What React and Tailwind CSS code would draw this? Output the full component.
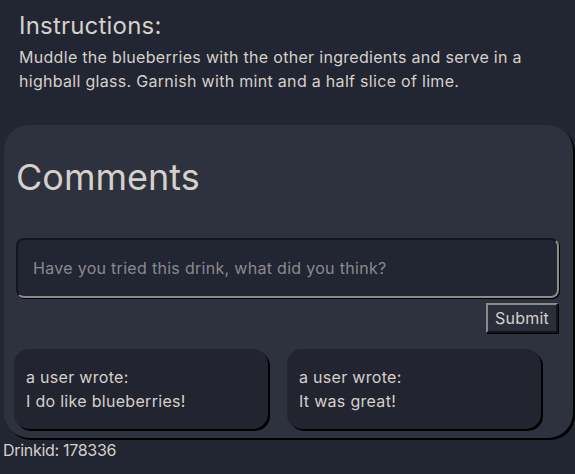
export default function App() {
  const font = { fontFamily: 'Inter, "Open Sans", sans-serif' };
  return (
    <div className="min-h-[474px] w-[575px] bg-[#222532] text-[#d6d0ca]" style={font}>
      <section className="px-[19px] pt-[10px]">
        <h3 className="text-[24px] leading-[32px] tracking-[0.2px]">Instructions:</h3>
        <p className="mt-[3px] text-[16px] leading-[24px] tracking-[0.3px]">
          Muddle the blueberries with the other ingredients and serve in a highball glass. Garnish with mint and a half slice of lime.
        </p>
      </section>

      <section className="ml-[4px] mt-[32px] w-[569px] rounded-[25px] bg-[#2e313e] px-[10px] pb-[9px] pt-[28px] shadow-[2px_2px_0_#000]">
        <h2 className="pl-[2px] text-[36px] leading-[48px]">Comments</h2>

        <div className="mt-[37px] flex flex-col">
          <input
            type="text"
            placeholder="Have you tried this drink, what did you think?"
            className="ml-[2px] h-[60px] w-[543px] rounded-[8px] border-2 border-t-[#15161d] border-l-[#15161d] border-r-[#8c8c8c] border-b-[#8c8c8c] bg-[#222532] pl-[15px] text-[16px] tracking-[0.3px] text-[#d6d0ca] shadow-[1px_1px_0_#000] outline-none placeholder:text-[#8a8a8e]"
          />
          <button
            type="button"
            className="mr-[5px] mt-[5px] h-[30px] w-[72px] self-end border-2 border-t-[#8a8a8a] border-l-[#8a8a8a] border-r-[#14151b] border-b-[#14151b] bg-[#2b2e3a] text-[16px] leading-[24px] tracking-[0.2px] text-[#d6d0ca] shadow-[1px_1px_0_#000]"
          >
            Submit
          </button>
        </div>

        <div className="mt-[16px] flex gap-[19px]">
          {[
            'I do like blueberries!',
            'It was great!',
          ].map((t) => (
            <div
              key={t}
              className="w-[254px] rounded-[15px] bg-[#222430] px-[12px] py-[16px] text-[16px] leading-[24px] tracking-[0.3px] shadow-[2px_2px_0_#000]"
            >
              <p>a user wrote:</p>
              <p>{t}</p>
            </div>
          ))}
        </div>
      </section>

      <p className="pl-[3px] text-[16px] leading-[24px] tracking-[-0.3px]">Drinkid: 178336</p>
    </div>
  );
}
